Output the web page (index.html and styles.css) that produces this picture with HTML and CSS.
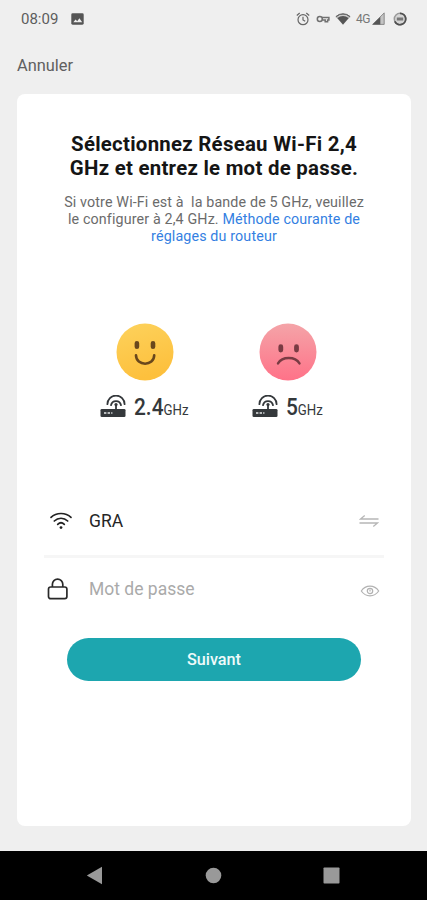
FILE: index.html
```html
<!DOCTYPE html>
<html lang="fr">
<head>
<meta charset="utf-8">
<meta name="viewport" content="width=device-width, initial-scale=1">
<title>Réseau Wi-Fi</title>
<link rel="stylesheet" href="styles.css">
</head>
<body>
<svg class="defs" width="0" height="0" aria-hidden="true">
  <defs>
    <linearGradient id="happy" x1="0" y1="0" x2="0.3" y2="1"><stop offset="0" stop-color="#fdd25c"/><stop offset="1" stop-color="#fdc03d"/></linearGradient>
    <linearGradient id="sad" x1="0" y1="0" x2="0" y2="1"><stop offset="0" stop-color="#f4a4a8"/><stop offset="1" stop-color="#ff7288"/></linearGradient>
    <symbol id="router" viewBox="0 0 26 23">
      <g fill="none" stroke="#34383b" stroke-width="1.8" stroke-linecap="round">
        <path d="M7.4 9.2a8.6 8.6 0 0 1 17.2 0"/>
        <path d="M11 10.2a5.1 5.1 0 0 1 10 0"/>
        <path d="M16 9.6v4.6"/>
      </g>
      <circle cx="16" cy="9.6" r="1.6" fill="#34383b"/>
      <rect x="0.5" y="14" width="25" height="8" rx="1.3" fill="#34383b"/>
      <path d="M4 18h2.4M7.6 18h2.4M11.2 18h1.2" stroke="#b9bcbd" stroke-width="2"/>
    </symbol>
  </defs>
</svg>

<header class="status">
  <span class="time">08:09</span>
  <svg class="picture" width="13" height="12" viewBox="0 0 13 12"><rect x=".3" y=".3" width="12.4" height="11.4" rx="1.4" fill="#555"/><path d="M2.3 9.3 4.6 6.4l1.6 1.8 2.2-3 2.8 4.1z" fill="#efefef"/></svg>
  <div class="indicators">
    <svg width="14" height="14" viewBox="0 0 14 14" fill="none" stroke="#666" stroke-width="1.2"><circle cx="7" cy="7.7" r="5"/><path d="M7 4.7v3.2l2.2 1.4M.8 3.5 3.7 1M13.2 3.5 10.3 1"/></svg>
    <svg class="key" width="14" height="8" viewBox="0 0 14 8" fill="none" stroke="#707070" stroke-width="1.5"><circle cx="3.8" cy="4" r="2.5"/><path d="M6 2.6H12.9v2.4H11.6v1.8H9.2V5H6.4"/></svg>
    <svg class="signal" width="16" height="12" viewBox="0 0 16 12"><path d="M.8 3.6a10.5 10.5 0 0 1 14.4 0L8 11.8z" fill="#555"/><path d="M2 4.5a9.2 9.2 0 0 1 12 0" fill="none" stroke="#c9c9c9" stroke-width="1.4"/><path d="M.8 3.6a10.5 10.5 0 0 1 14.4 0" fill="none" stroke="#666"/></svg>
    <span class="network">4G</span>
    <svg class="bars" width="13" height="13" viewBox="0 0 13 13"><path d="M.6 12.4h11.6V.9z" fill="#c4c4c4" stroke="#777" stroke-width=".8"/><path d="M.6 12.4h7.7V4.9z" fill="#555"/></svg>
    <svg class="battery" width="14" height="14" viewBox="0 0 14 14"><circle cx="7" cy="7" r="5.7" fill="#d5d5d5" stroke="#999" stroke-width="1.5"/><path d="M7 1.3A5.7 5.7 0 1 1 1.8 9.3" fill="none" stroke="#505050" stroke-width="1.8"/><path d="M3.8 7h6.4" stroke="#777" stroke-width="3"/></svg>
  </div>
</header>

<nav class="topbar"><a class="cancel">Annuler</a></nav>

<main class="card">
  <h1 class="title">Sélectionnez Réseau Wi-Fi 2,4<br>GHz et entrez le mot de passe.</h1>
  <p class="hint">Si votre Wi-Fi est à&nbsp; la bande de 5 GHz, veuillez<br>le configurer à 2,4 GHz. <a class="link">Méthode courante de<br>réglages du routeur</a></p>

  <section class="bands">
    <div class="band">
      <svg width="58" height="58" viewBox="0 0 58 58"><circle cx="29" cy="29" r="28.5" fill="url(#happy)"/><g fill="none" stroke="#69471c" stroke-linecap="round"><path d="M20.9 20.2v3.6M37 20.2v3.6" stroke-width="4.6"/><path d="M20 32.3c0 11.2 18.2 11.2 18.2 0" stroke-width="2.6"/></g></svg>
      <div class="label"><svg width="26" height="23"><use href="#router"/></svg><span class="freq"><span class="number">2.4</span><span class="unit">GHz</span></span></div>
    </div>
    <div class="band">
      <svg width="58" height="58" viewBox="0 0 58 58"><circle cx="29" cy="29" r="28.5" fill="url(#sad)"/><g fill="none" stroke="#793b43" stroke-linecap="round"><path d="M21.8 23.7v3.4M37.5 23.7v3.4" stroke-width="4.8"/><path d="M19 40.4c4.3-7.2 17.2-7.2 21.5 0" stroke-width="2.4"/></g></svg>
      <div class="label five"><svg width="26" height="23"><use href="#router"/></svg><span class="freq"><span class="number">5</span><span class="unit">GHz</span></span></div>
    </div>
  </section>

  <form class="form">
    <div class="field">
      <svg class="lead" width="24" height="18" viewBox="0 0 24 18" fill="none" stroke="#222" stroke-width="1.7" stroke-linecap="round"><path d="M2 5.4C7.4.2 16.6.2 22 5.4M5.3 9c3.8-3.7 9.6-3.7 13.4 0M8.7 12.3c2-1.9 4.6-1.9 6.6 0"/><circle cx="12" cy="15.6" r="1.4" fill="#222" stroke="none"/></svg>
      <span class="value">GRA</span>
      <svg class="swap" width="20" height="14" viewBox="0 0 20 14" fill="none" stroke="#b6b6b6" stroke-width="1.3"><path d="M5.7 1.4 1.5 5h18M14.3 12.6 18.5 9H.5"/></svg>
    </div>
    <div class="field password">
      <svg class="lead lock" width="22" height="22" viewBox="0 0 22 22" fill="none" stroke="#292929" stroke-width="1.7"><rect x="1.5" y="9" width="18.4" height="11.7" rx="2.2"/><path d="M5.4 9V6.3a5.2 5.2 0 0 1 10.4 0V9"/></svg>
      <span class="value placeholder">Mot de passe</span>
      <svg class="eye" width="20" height="14" viewBox="0 0 20 14" fill="none" stroke="#b2b2b2" stroke-width="1.2"><path d="M1.3 7c4.4-6.4 13-6.4 17.4 0-4.4 6.4-13 6.4-17.4 0z"/><circle cx="10" cy="7" r="2.7"/><path d="M10 5.5V7.5"/></svg>
    </div>
    <button class="next" type="button">Suivant</button>
  </form>
</main>

<footer class="navbar">
  <svg width="17" height="19" viewBox="0 0 17 19"><path d="M.8 9.5 16 .8v17.4z" fill="#999"/></svg>
  <svg width="17" height="17" viewBox="0 0 17 17"><circle cx="8.5" cy="8.5" r="7.8" fill="#999"/></svg>
  <svg width="17" height="17" viewBox="0 0 17 17"><rect x=".5" y=".5" width="16" height="16" rx=".8" fill="#999"/></svg>
</footer>
</body>
</html>
```
FILE: styles.css
```css
* { box-sizing: border-box; }
body {
  margin: 0;
  height: 900px;
  display: flex;
  flex-direction: column;
  background: #efefef;
  font-family: Roboto, "Liberation Sans", sans-serif;
  color: #151515;
  overflow: hidden;
}
svg { display: block; flex: none; }
.status {
  height: 37px;
  display: flex;
  align-items: center;
  padding: 0 20px 0 21px;
}
.time { width: 50px; font-size: 15px; color: #5d5d5d; }
.indicators { display: flex; align-items: center; margin-left: auto; }
.key { margin-left: 6px; }
.signal { margin-left: 5px; }
.network { margin-left: 5px; width: 16px; font-size: 12px; letter-spacing: -.6px; color: #777; }
.bars { margin-left: 0; margin-right: 1px; }
.battery { margin-left: 7px; }
.topbar {
  height: 57px;
  display: flex;
  align-items: center;
  padding: 0 17px;
}
.cancel { font-size: 16.4px; color: #606060; }
.card {
  height: 732px;
  margin: 0 16px 0 17px;
  padding-top: 38px;
  border-radius: 8px;
  background: #fff;
}
.title {
  margin: 0;
  font-size: 20.4px;
  line-height: 24px;
  font-weight: 700;
  letter-spacing: .27px;
  text-align: center;
  white-space: nowrap;
}
.hint {
  margin: 14px 0 0;
  font-size: 14.3px;
  letter-spacing: .13px;
  line-height: 17px;
  color: #6b6b6b;
  text-align: center;
  white-space: nowrap;
}
.link { color: #347fe2; }
.bands {
  display: grid;
  grid-template-columns: 144px 142px;
  padding: 78px 0 0 56px;
}
.band { display: flex; flex-direction: column; align-items: center; }
.label {
  display: flex;
  align-items: center;
  width: 90px;
  height: 28px;
  margin-top: 11px;
}
.five { width: 72px; margin-right: 1px; }
.freq {
  flex: none;
  display: flex;
  align-items: baseline;
  margin: 5px 0 0 8px;
  color: #34383b;
  font-weight: 500;
  line-height: 28px;
  white-space: nowrap;
  transform: scaleX(.87);
  transform-origin: left;
}
.number { font-size: 24px; }
.unit { font-size: 15.2px; font-weight: 400; }
.form { margin: 67px 27px 0; }
.field {
  height: 71px;
  display: flex;
  align-items: center;
  padding: 0 5px 0 5px;
  border-bottom: 3px solid #f6f6f6;
}
.lead { width: 24px; margin-right: 16px; }
.value { flex: 1; font-size: 17.5px; color: #252525; }
.placeholder { color: #aaa; }
.password { height: 61px; padding-right: 4px; border-bottom: 0; }
.lock { width: 22px; margin-left: -2px; margin-right: 20px; }
.eye { margin-top: 4px; }
.next {
  display: block;
  width: 294px;
  height: 43px;
  margin: 19px 0 0 23px;
  padding: 0;
  border: 0;
  border-radius: 22px;
  background: #1da6af;
  color: #eefafa;
  font: 500 16.2px/43px Roboto, "Liberation Sans", sans-serif;
}
.navbar {
  height: 49px;
  margin-top: auto;
  display: flex;
  justify-content: space-between;
  align-items: center;
  padding: 0 87px 0 86px;
  background: #000;
}
```
